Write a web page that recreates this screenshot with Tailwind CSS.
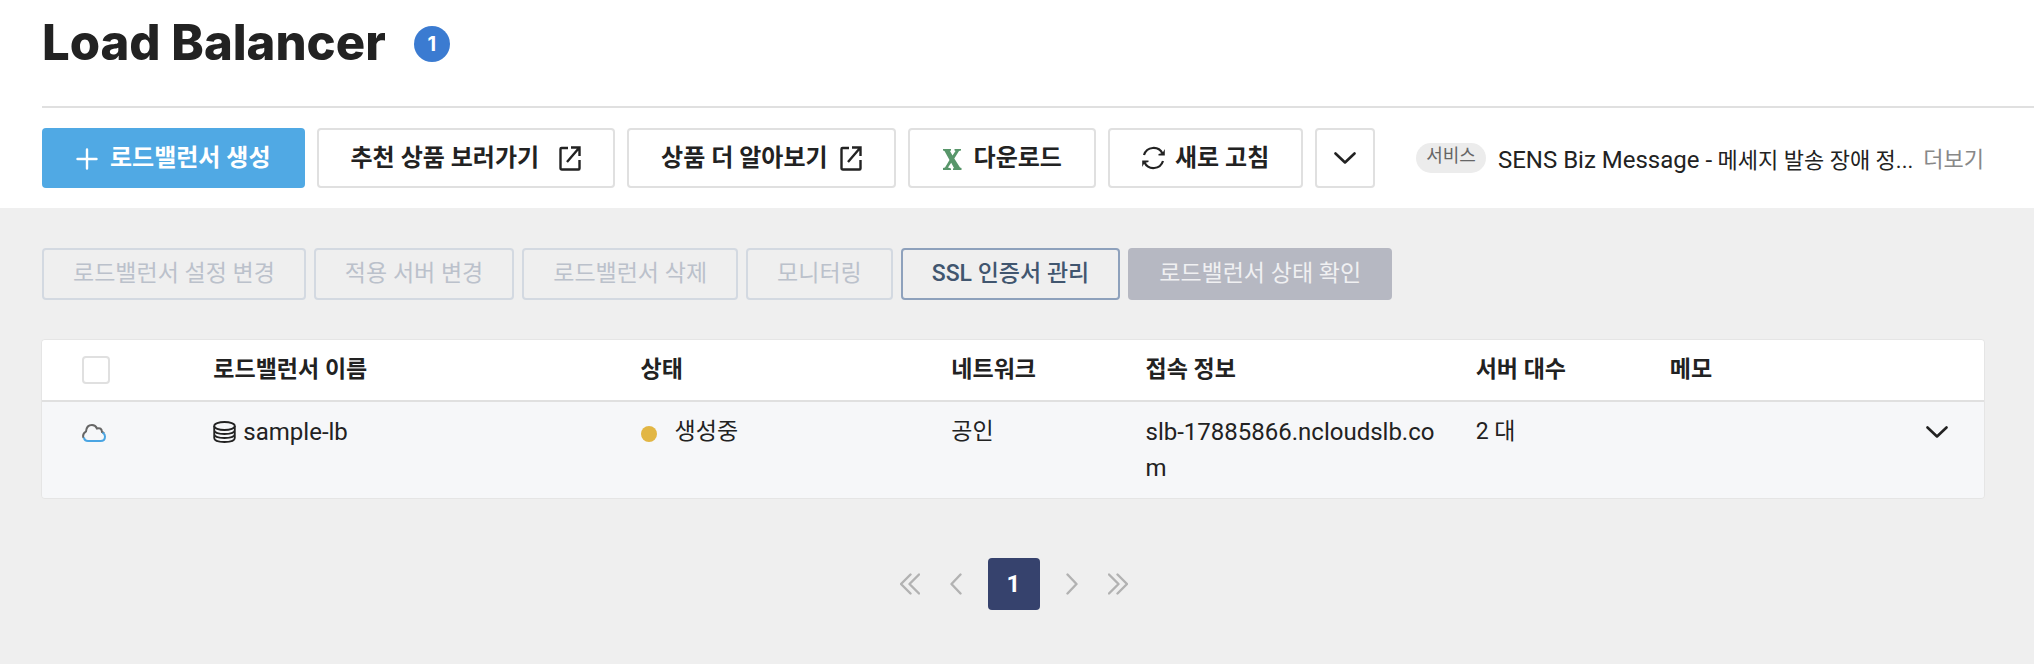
<!DOCTYPE html>
<html lang="ko">
<head>
<meta charset="utf-8">
<meta name="viewport" content="width=device-width, initial-scale=1">
<title>Load Balancer</title>
<script src="https://cdn.jsdelivr.net/npm/@tailwindcss/browser@4"></script>
</head>
<body class="min-h-screen bg-[#efefef] font-[Roboto,'Noto_Sans_CJK_KR',sans-serif] text-[#222]">
<svg class="hidden" aria-hidden="true">
  <symbol id="external" viewBox="0 0 22 26"><path d="M9 3H2.500Q1.500 3 1.500 4V23Q1.500 24.500 3 24.500H19.500Q20.500 24.500 20.500 23.500V15" /><path d="M12 2.500H20.500V11M20 3L8 17" /></symbol>
  <symbol id="down" viewBox="0 0 22 12"><path d="M1.500 1.500L11 10.500L20.500 1.500" /></symbol>
  <symbol id="left" viewBox="0 0 12 22"><path d="M10.500 1.500L1.500 11L10.500 20.500" /></symbol>
</svg>

<header class="bg-white pl-[42px]">
  <div class="flex h-[108px] items-start border-b-2 border-[#e0e0e0] pt-3">
    <h1 class="font-[Inter,sans-serif] text-[49px] leading-[62px] font-extrabold">Load Balancer</h1>
    <span class="mt-3.5 ml-7 flex size-9 items-center justify-center rounded-full bg-[#3b7bd1] font-[Inter,sans-serif] text-xl font-bold text-white">1</span>
  </div>
  <div class="flex h-[100px] items-center gap-3 pr-[50px] text-2xl font-bold whitespace-nowrap">
    <button class="flex h-[60px] items-center gap-3 rounded bg-[#50a9e4] px-[34px] text-white">
      <svg class="mt-0.5 size-[22px]" viewBox="0 0 22 22" fill="none" stroke="currentColor" stroke-width="2.400" stroke-linecap="round"><path d="M11 1.500V20.500M1.500 11H20.500"/></svg>
      로드밸런서 생성
    </button>
    <button class="flex h-[60px] items-center gap-5 rounded border-2 border-[#e0e0e0] px-8">
      추천 상품 보러가기
      <svg class="h-[26px] w-[22px]" fill="none" stroke="currentColor" stroke-width="2.400"><use href="#external"/></svg>
    </button>
    <button class="flex h-[60px] items-center gap-3 rounded border-2 border-[#e0e0e0] px-8">
      상품 더 알아보기
      <svg class="h-[26px] w-[22px]" fill="none" stroke="currentColor" stroke-width="2.400"><use href="#external"/></svg>
    </button>
    <button class="flex h-[60px] items-center gap-3 rounded border-2 border-[#e0e0e0] px-8">
      <svg class="mt-0.5 h-[21px] w-5" viewBox="0 0 20 21" fill="#58966a"><path d="M1 0H9V1.500L8 2L10.500 6.500L13.500 2L12.500 1.500V0H19V1.500L17 2L12.300 9.500L18 18.500L19.500 19V21H11V19.500L12 19L9.200 13.800L6 18.500L9 19.500V21H1V19L3 18.500L7.500 11L2.500 2L1 1.500Z"/></svg>
      다운로드
    </button>
    <button class="flex h-[60px] items-center gap-2.5 rounded border-2 border-[#e0e0e0] px-8">
      <svg class="h-6 w-[23px]" viewBox="0 0 23 24" fill="none" stroke="currentColor" stroke-width="2.200"><path d="M2 9A10 10 0 0 1 20.500 7.500M21 15A10 10 0 0 1 2.500 16.500"/><path fill="currentColor" stroke="none" d="M22.800 3V9.500H16.500V8L20.500 7ZM.200 21V14.500H6.500V16L2.500 17Z"/></svg>
      새로 고침
    </button>
    <button aria-label="더 많은 작업" class="flex size-[60px] shrink-0 items-center justify-center rounded border-2 border-[#e0e0e0]">
      <svg class="h-3 w-[22px]" fill="none" stroke="currentColor" stroke-width="2.600" stroke-linecap="round" stroke-linejoin="round"><use href="#down"/></svg>
    </button>
    <div class="ml-auto flex items-center text-[22px] font-normal">
      <span class="mr-3 flex h-[30px] items-center rounded-full bg-[#ececec] px-2.5 pb-1 text-lg text-[#666]">서비스</span>
      <span class="pt-1"><span class="text-2xl">SENS Biz Message -</span> 메세지 발송 장애 정...</span>
      <a href="#" class="ml-2.5 pt-1 text-[#888]">더보기</a>
    </div>
  </div>
</header>

<main class="px-[42px] pt-10 pr-[49px]">
  <div class="flex gap-2 text-[23px] whitespace-nowrap text-[#bbc1cb]">
    <button disabled class="h-[52px] rounded border-2 border-[#d3d9e1] px-[29px]">로드밸런서 설정 변경</button>
    <button disabled class="h-[52px] rounded border-2 border-[#d3d9e1] px-[29px]">적용 서버 변경</button>
    <button disabled class="h-[52px] rounded border-2 border-[#d3d9e1] px-[29px]">로드밸런서 삭제</button>
    <button disabled class="h-[52px] rounded border-2 border-[#d3d9e1] px-[29px]">모니터링</button>
    <button class="h-[52px] rounded border-2 border-[#8ea1bc] px-[29px] font-medium text-[#41566f]">SSL 인증서 관리</button>
    <button disabled class="h-[52px] rounded bg-[#b6b8c2] px-[31px] text-[#f0f0f2]">로드밸런서 상태 확인</button>
  </div>

  <div class="mt-[39px] -ml-px overflow-hidden rounded border border-[#e5e5e5]">
    <table class="w-full table-fixed text-left text-[23px] leading-9">
      <thead class="bg-white">
        <tr class="h-[61px] border-b-2 border-[#e0e0e0]">
          <th class="w-[8%] pl-10"><input type="checkbox" aria-label="전체 선택" class="block size-7 appearance-none rounded border-2 border-[#e0e0e0] bg-white"></th>
          <th class="w-[22%] px-4 font-bold">로드밸런서 이름</th>
          <th class="w-[16%] px-4 font-bold">상태</th>
          <th class="w-[10%] px-4 font-bold">네트워크</th>
          <th class="w-[17%] px-4 font-bold">접속 정보</th>
          <th class="w-[10%] px-4 font-bold">서버 대수</th>
          <th class="w-[17%] px-4 font-bold">메모</th>
        </tr>
      </thead>
      <tbody class="bg-[#f6f7f9]">
        <tr class="align-top">
          <td class="py-3 pl-10">
            <svg class="mt-2.5 h-[18px] w-6" viewBox="0 0 24 18" fill="none" stroke-width="2"><path stroke="#666" d="M1.500 14Q0 10 4 7.500Q4.500 1 10 1Q13.500 1 15 4.500Q19.500 3 20 8Q21.500 8.500 22 9.500"/><path stroke="#4aa5e3" d="M2 13.500Q2.500 17 6 17H18.500Q23 17 23 12.500Q23 10 20.500 8.500"/></svg>
          </td>
          <td class="px-4 py-3 text-2xl leading-9">
            <span class="flex items-center gap-[7px]">
              <svg class="h-[22px] w-[23px]" viewBox="0 0 23 22" fill="none" stroke="currentColor" stroke-width="1.800"><ellipse cx="11.500" cy="5" rx="10.300" ry="4"/><path d="M1.200 5V17C1.200 22.300 21.800 22.300 21.800 17V5M1.200 9C1.200 14.300 21.800 14.300 21.800 9M1.200 13C1.200 18.300 21.800 18.300 21.800 13"/></svg>
              sample-lb
            </span>
          </td>
          <td class="px-4 py-3"><span class="flex items-center gap-[18px]"><span class="mt-1 size-4 rounded-full bg-[#e2b644]"></span>생성중</span></td>
          <td class="px-4 py-3">공인</td>
          <td class="px-4 py-3 text-2xl leading-9 break-all">slb-17885866.ncloudslb.com</td>
          <td class="px-4 py-3">2 대</td>
          <td class="py-3 pr-9">
            <button aria-label="상세 보기" class="ml-auto flex h-9 items-center"><svg class="h-3 w-[22px]" fill="none" stroke="currentColor" stroke-width="2.600" stroke-linecap="round" stroke-linejoin="round"><use href="#down"/></svg></button>
          </td>
        </tr>
      </tbody>
    </table>
  </div>

  <nav aria-label="페이지" class="mt-[59px] flex h-[52px] items-center justify-center text-[#b2b2b2]">
    <button aria-label="처음"><svg class="h-[22px] w-5" viewBox="0 0 20 22" fill="none" stroke="currentColor" stroke-width="2.400" stroke-linecap="round" stroke-linejoin="round"><path d="M10.500 1.500L1 11L10.500 20.500M19 1.500L9.500 11L19 20.500"/></svg></button>
    <button aria-label="이전" class="ml-[30px]"><svg class="h-[22px] w-3" fill="none" stroke="currentColor" stroke-width="2.400" stroke-linecap="round" stroke-linejoin="round"><use href="#left"/></svg></button>
    <button aria-current="page" class="mx-[26px] size-[52px] rounded bg-[#36426d] text-2xl font-bold text-white">1</button>
    <button aria-label="다음" class="mr-[30px]"><svg class="h-[22px] w-3 rotate-180" fill="none" stroke="currentColor" stroke-width="2.400" stroke-linecap="round" stroke-linejoin="round"><use href="#left"/></svg></button>
    <button aria-label="마지막"><svg class="h-[22px] w-5" viewBox="0 0 20 22" fill="none" stroke="currentColor" stroke-width="2.400" stroke-linecap="round" stroke-linejoin="round"><path d="M1 1.500L10.500 11L1 20.500M9.500 1.500L19 11L9.500 20.500"/></svg></button>
  </nav>
</main>
</body>
</html>
